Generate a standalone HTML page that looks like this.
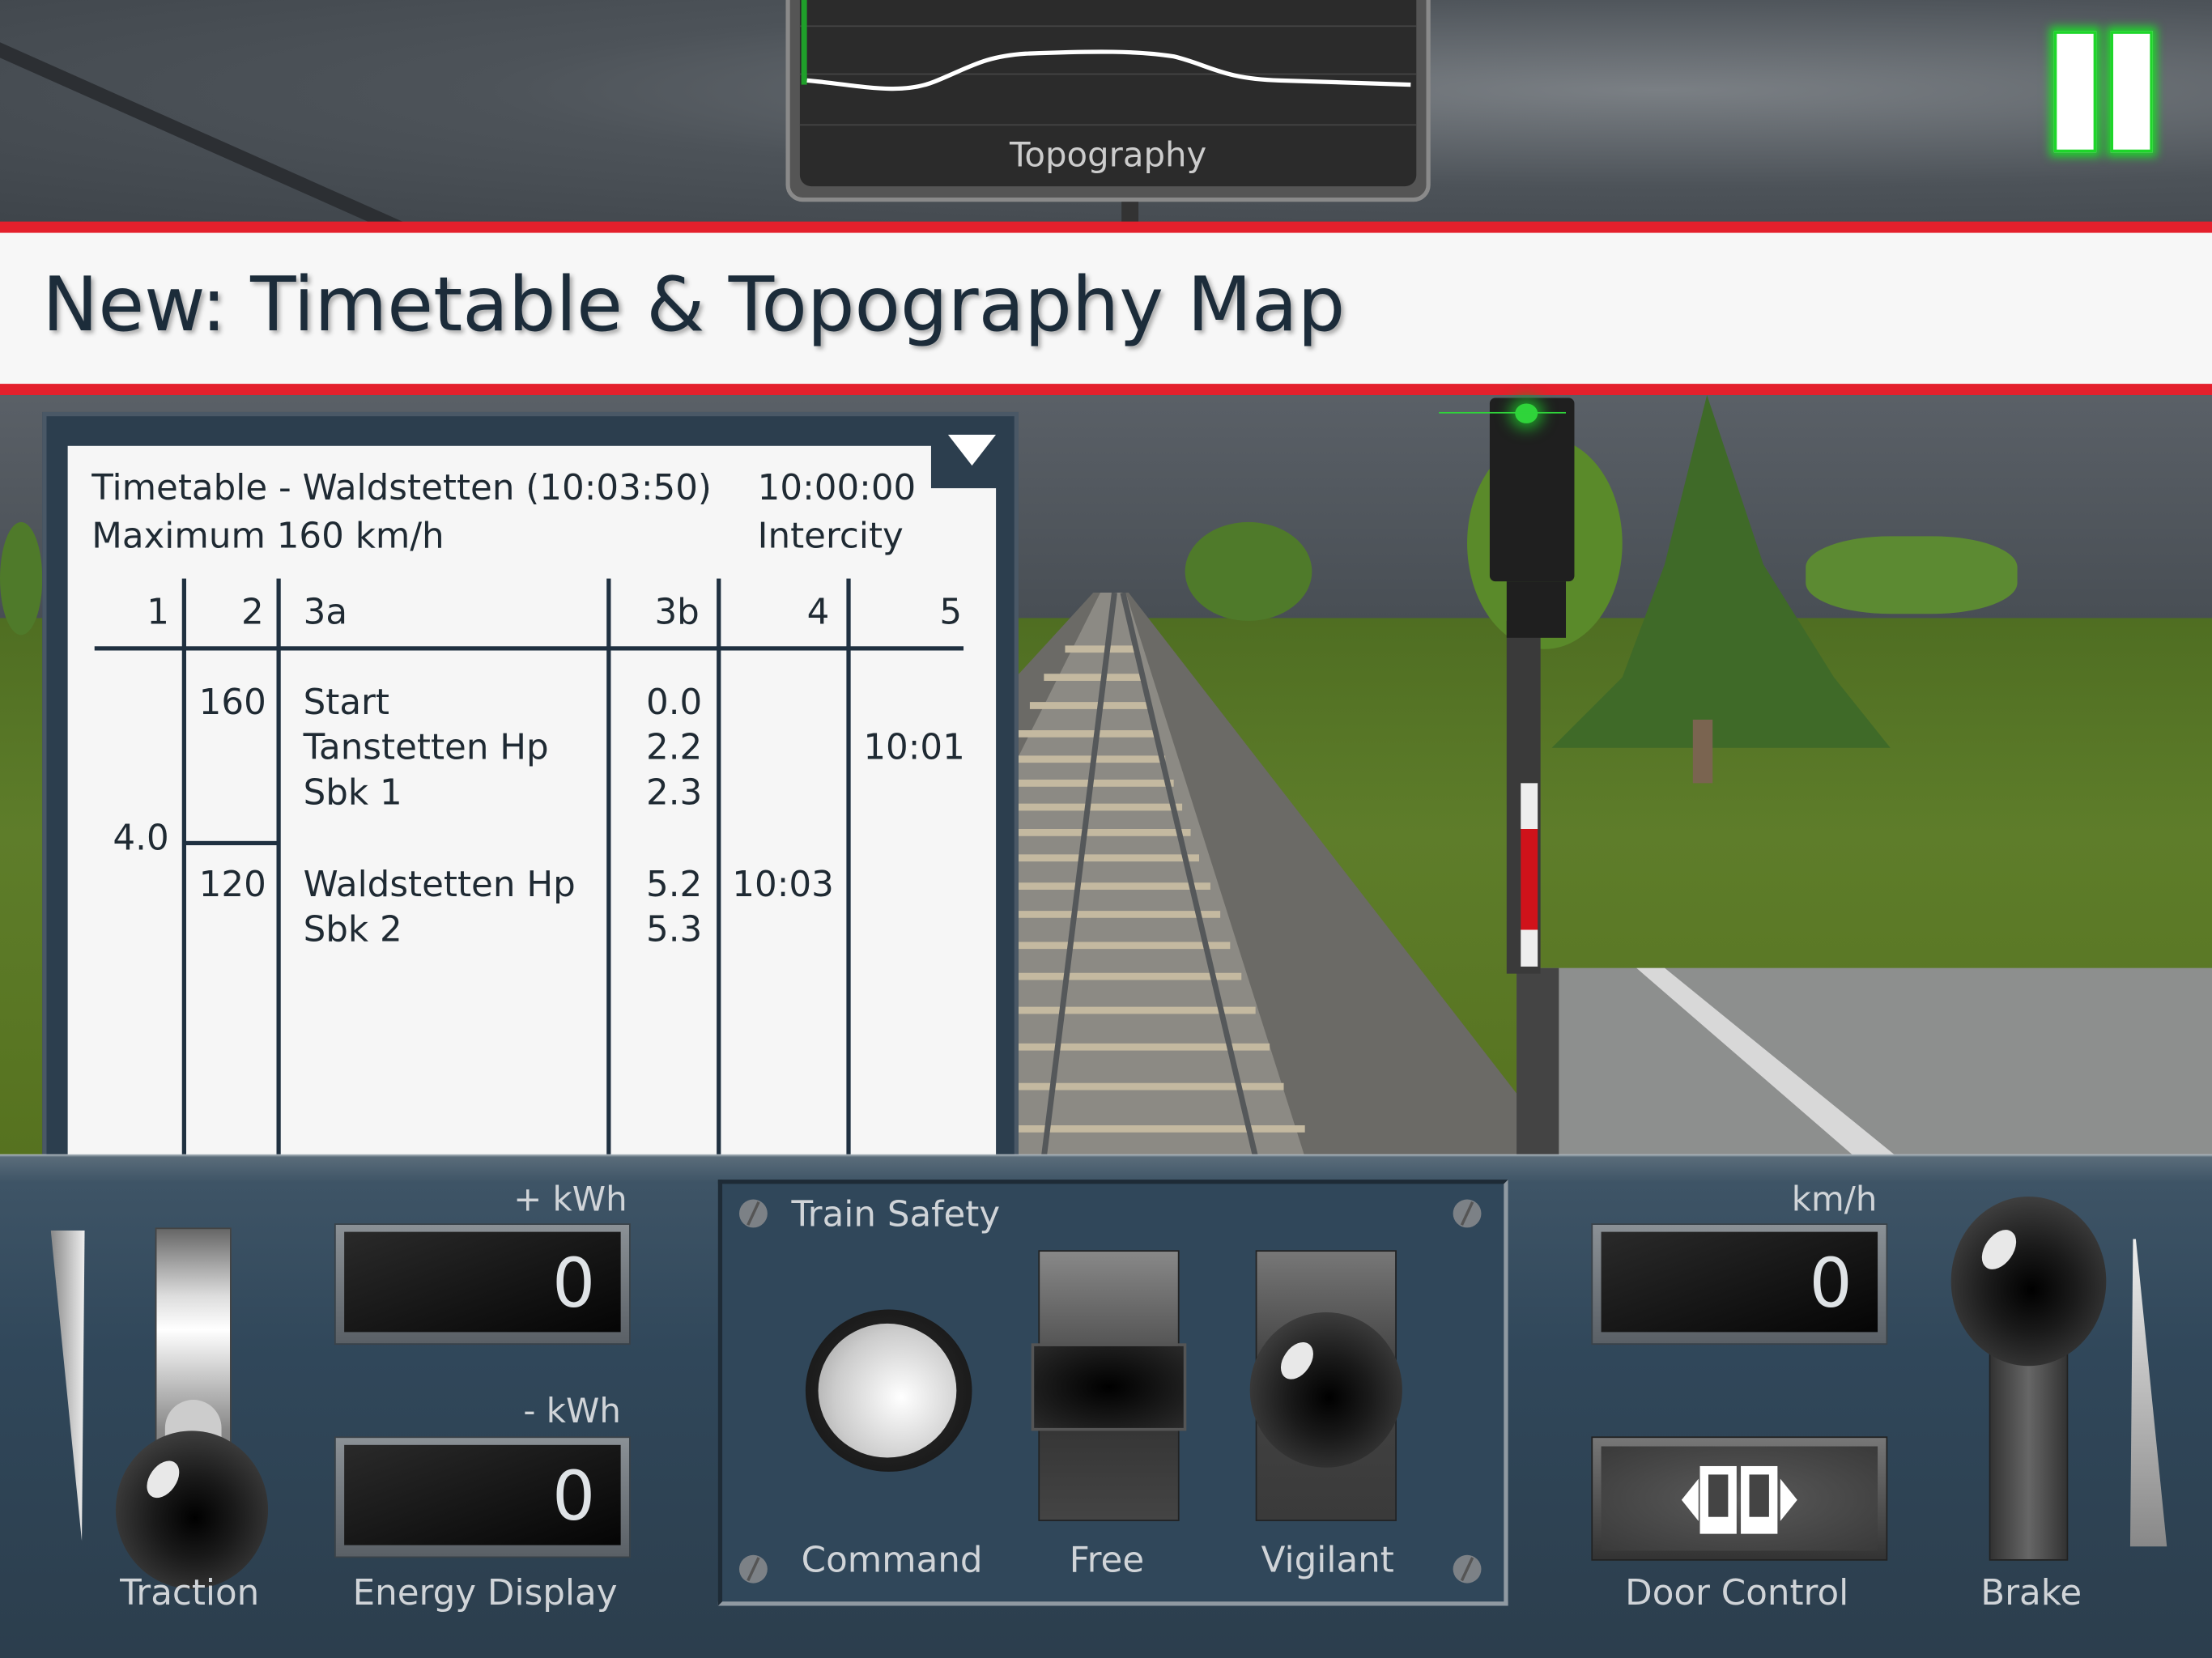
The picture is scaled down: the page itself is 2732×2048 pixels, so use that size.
<!DOCTYPE html>
<html><head><meta charset="utf-8"><style>
*{margin:0;padding:0;box-sizing:border-box}
html,body{width:2732px;height:2048px;overflow:hidden;background:#2e3e4c}
#s{position:absolute;left:0;top:0;width:1568px;height:1175px;transform:scale(1.74235,1.74298);transform-origin:0 0;overflow:hidden;font-family:"DejaVu Sans","Liberation Sans",sans-serif}
.a{position:absolute}
.t{position:absolute;font-size:25px;color:#1f2a33;line-height:1;white-space:nowrap}
.v{position:absolute;width:3px;background:#1f3040;top:410px;height:410px}
.lbl{position:absolute;color:#d0d4d8;font-size:25px;white-space:nowrap;line-height:1}
.disp{position:absolute;background:linear-gradient(#8b9196,#5a6066);padding:5px 6px 8px 6px;border:1px solid #3a4248}
.disp div{width:100%;height:100%;background:linear-gradient(160deg,#2a2a2a,#050505);color:#dfe3e6;font-size:48px;text-align:right;padding-right:18px;line-height:74px}
.knob{position:absolute;border-radius:50%;background:radial-gradient(circle at 52% 55%,#000 0,#1a1a1a 35%,#555 100%)}
.knob:after{content:"";position:absolute;left:22%;top:18%;width:18%;height:26%;background:#e8e8e8;border-radius:50%;transform:rotate(35deg)}
.screw{position:absolute;width:20px;height:20px;border-radius:50%;background:#7c8186}
.screw:after{content:"";position:absolute;left:9px;top:1px;width:2px;height:18px;background:#555;transform:rotate(25deg)}
</style></head><body><div id="s">
<div class="a" style="left:0;top:0;width:1568px;height:160px;background:radial-gradient(ellipse at 75% 40%,#7a7f84 0,#4d5359 50%,#3e444a 100%)"></div>
<div class="a" style="left:0;top:30px;width:320px;height:10px;background:#2c2f33;transform:rotate(24deg);transform-origin:0 0"></div>
<div class="a" style="left:557px;top:-10px;width:457px;height:153px;background:#555;border-radius:0 0 12px 12px;border:3px solid #8a8a8a"></div>
<div class="a" style="left:567px;top:0;width:437px;height:132px;background:#2b2b2b;border-radius:0 0 8px 8px"></div>
<div class="a" style="left:567px;top:18px;width:437px;height:1px;background:#444"></div>
<div class="a" style="left:567px;top:52px;width:437px;height:1px;background:#444"></div>
<div class="a" style="left:567px;top:88px;width:437px;height:1px;background:#444"></div>
<div class="a" style="left:568px;top:0;width:4px;height:60px;background:#1fa02a"></div>
<svg class="a" style="left:567px;top:0" width="437" height="90"><path d="M5 57 C40 60,70 68,95 58 C120 48,130 40,160 38 C210 36,240 36,265 40 C290 46,300 56,340 57 L433 60" stroke="#fff" stroke-width="3" fill="none"/></svg>
<div class="a" style="left:567px;top:96px;width:437px;text-align:center;color:#ccc;font-size:24px">Topography</div>
<div class="a" style="left:795px;top:143px;width:12px;height:15px;background:#333"></div>
<div class="a" style="left:1456px;top:22px;width:30px;height:86px;background:#fff;box-shadow:0 0 6px 3px #1ed62a;border:2px solid #1ed62a"></div>
<div class="a" style="left:1496px;top:22px;width:30px;height:86px;background:#fff;box-shadow:0 0 6px 3px #1ed62a;border:2px solid #1ed62a"></div>
<div class="a" style="left:0;top:157px;width:1568px;height:123px;background:#e4202c"></div>
<div class="a" style="left:0;top:165px;width:1568px;height:107px;background:#f7f7f7"></div>
<div class="a" style="left:30px;top:186px;font-size:53px;color:#1c2c3a;white-space:nowrap;font-family:'DejaVu Sans',sans-serif;text-shadow:2px 2px 3px #aaa">New: Timetable &amp; Topography Map</div>
<div class="a" style="left:0;top:280px;width:1568px;height:170px;background:linear-gradient(#5a6067,#474d53)"></div>
<div class="a" style="left:0;top:438px;width:1568px;height:384px;background:linear-gradient(#4f6e22,#5e7d2a 40%,#56721f)"></div>
<div class="a" style="left:0;top:370px;width:30px;height:80px;border-radius:50%;background:#4f7a2a"></div>
<div class="a" style="left:840px;top:370px;width:90px;height:70px;border-radius:50%;background:#4f7a2a"></div>
<div class="a" style="left:1280px;top:380px;width:150px;height:55px;border-radius:40%;background:#5c8a32"></div>
<div class="a" style="left:1040px;top:310px;width:110px;height:150px;border-radius:50%;background:#5a8a2a"></div>
<svg class="a" style="left:1100px;top:280px" width="240" height="280"><polygon points="110,0 150,120 200,200 240,250 0,250 50,200 80,120" fill="#3f6a28"/><rect x="100" y="230" width="14" height="45" fill="#7a6450"/></svg>
<svg class="a" style="left:720px;top:420px" width="400" height="400"><polygon points="55,0 80,0 390,400 0,400 0,60" fill="#6b6a66"/><polygon points="60,0 78,0 205,400 0,400 0,120" fill="#8c8a84"/>
<g stroke="#c4b9a0" stroke-width="5"><line x1="0" y1="380" x2="205" y2="380"/><line x1="0" y1="350" x2="190" y2="350"/><line x1="0" y1="322" x2="180" y2="322"/><line x1="0" y1="296" x2="170" y2="296"/><line x1="0" y1="272" x2="160" y2="272"/><line x1="0" y1="250" x2="152" y2="250"/><line x1="0" y1="228" x2="145" y2="228"/><line x1="0" y1="208" x2="138" y2="208"/><line x1="0" y1="188" x2="130" y2="188"/><line x1="0" y1="170" x2="124" y2="170"/><line x1="0" y1="152" x2="118" y2="152"/><line x1="0" y1="135" x2="112" y2="135"/><line x1="0" y1="118" x2="106" y2="118"/><line x1="0" y1="100" x2="100" y2="100"/><line x1="10" y1="80" x2="95" y2="80"/><line x1="20" y1="60" x2="90" y2="60"/><line x1="35" y1="40" x2="85" y2="40"/></g>
<g stroke="#55585a" stroke-width="4"><line x1="70" y1="0" x2="20" y2="400"/><line x1="76" y1="0" x2="170" y2="400"/></g></svg>
<div class="a" style="left:1075px;top:686px;width:493px;height:134px;background:#8d8f8e"></div>
<svg class="a" style="left:1075px;top:686px" width="493" height="134"><polygon points="85,0 105,0 270,134 240,134" fill="#d8d8d8"/><polygon points="0,0 30,0 30,134 0,134" fill="#444"/></svg>
<div class="a" style="left:1068px;top:440px;width:24px;height:250px;background:#3a3a3a"></div>
<div class="a" style="left:1078px;top:555px;width:12px;height:130px;background:linear-gradient(#eee 0,#eee 25%,#d0121a 25%,#d0121a 80%,#eee 80%)"></div>
<div class="a" style="left:1056px;top:282px;width:60px;height:130px;background:#1f1f1f;border-radius:4px"></div>
<div class="a" style="left:1068px;top:412px;width:42px;height:40px;background:#1f1f1f"></div>
<div class="a" style="left:1074px;top:286px;width:16px;height:14px;border-radius:50%;background:#2fd43a;box-shadow:0 0 10px 4px #1ea028"></div>
<div class="a" style="left:1020px;top:292px;width:90px;height:1px;background:#2fd43a"></div>
<div class="a" style="left:30px;top:292px;width:692px;height:540px;background:#2c3e4e;border:3px solid #4a5866"></div>
<div class="a" style="left:48px;top:316px;width:658px;height:504px;background:#f6f6f6"></div>
<div class="a" style="left:660px;top:300px;width:56px;height:46px;background:#2c3e4e"></div>
<svg class="a" style="left:672px;top:308px" width="34" height="24"><polygon points="0,0 34,0 17,22" fill="#fff"/></svg>
<div class="t" style="left:65px;top:333px">Timetable - Waldstetten (10:03:50)</div>
<div class="t" style="left:537px;top:333px">10:00:00</div>
<div class="t" style="left:65px;top:367px">Maximum 160 km/h</div>
<div class="t" style="left:537px;top:367px">Intercity</div>
<div class="t" style="left:104px;top:421px">1</div>
<div class="t" style="left:171px;top:421px">2</div>
<div class="t" style="left:215px;top:421px">3a</div>
<div class="t" style="left:464px;top:421px">3b</div>
<div class="t" style="left:572px;top:421px">4</div>
<div class="t" style="left:666px;top:421px">5</div>
<div class="a" style="left:67px;top:458px;width:616px;height:3px;background:#1f3040"></div>
<div class="v" style="left:129px"></div><div class="v" style="left:196px"></div><div class="v" style="left:430px"></div><div class="v" style="left:508px"></div><div class="v" style="left:600px"></div>
<div class="a" style="left:130px;top:596px;width:68px;height:3px;background:#1f3040"></div>
<div class="t" style="left:141px;top:485px">160</div>
<div class="t" style="left:215px;top:485px">Start</div>
<div class="t" style="left:458px;top:485px">0.0</div>
<div class="t" style="left:215px;top:517px">Tanstetten Hp</div>
<div class="t" style="left:458px;top:517px">2.2</div>
<div class="t" style="left:612px;top:517px">10:01</div>
<div class="t" style="left:215px;top:549px">Sbk 1</div>
<div class="t" style="left:458px;top:549px">2.3</div>
<div class="t" style="left:80px;top:581px">4.0</div>
<div class="t" style="left:141px;top:614px">120</div>
<div class="t" style="left:215px;top:614px">Waldstetten Hp</div>
<div class="t" style="left:458px;top:614px">5.2</div>
<div class="t" style="left:519px;top:614px">10:03</div>
<div class="t" style="left:215px;top:646px">Sbk 2</div>
<div class="t" style="left:458px;top:646px">5.3</div>
<div class="a" style="left:0;top:818px;width:1568px;height:357px;background:linear-gradient(#b8c0c6 0,#5a6c7a 2px,#3e5466 20px,#30475a 40%,#2c3e4d 100%)"></div>
<svg class="a" style="left:36px;top:872px" width="26" height="228"><polygon points="0,0 24,0 22,220" fill="url(#g1)"/><defs><linearGradient id="g1"><stop offset="0" stop-color="#888"/><stop offset="1" stop-color="#eee"/></linearGradient></defs></svg>
<div class="a" style="left:110px;top:870px;width:54px;height:240px;background:linear-gradient(#666,#ddd 20%,#fff 30%,#888 60%,#555);border:1px solid #444"></div>
<div class="a" style="left:117px;top:992px;width:40px;height:60px;border-radius:20px;background:#ccc"></div>
<div class="knob" style="left:82px;top:1014px;width:108px;height:112px"></div>
<div class="lbl" style="left:85px;top:1116px">Traction</div>
<div class="lbl" style="left:364px;top:838px;font-size:24px">+ kWh</div>
<div class="disp" style="left:237px;top:867px;width:210px;height:86px"><div>0</div></div>
<div class="lbl" style="left:371px;top:988px;font-size:24px">- kWh</div>
<div class="disp" style="left:237px;top:1018px;width:210px;height:86px"><div>0</div></div>
<div class="lbl" style="left:250px;top:1116px">Energy Display</div>
<div class="a" style="left:509px;top:836px;width:560px;height:302px;border:3px solid #909aa2;border-top-color:#1e2b36;border-left-color:#1e2b36;background:#30475a"></div>
<div class="screw" style="left:524px;top:850px"></div><div class="screw" style="left:1030px;top:850px"></div>
<div class="screw" style="left:524px;top:1102px"></div><div class="screw" style="left:1030px;top:1102px"></div>
<div class="lbl" style="left:561px;top:848px">Train Safety</div>
<div class="a" style="left:571px;top:928px;width:118px;height:115px;border-radius:50%;background:radial-gradient(#333,#111)"></div>
<div class="a" style="left:580px;top:938px;width:98px;height:95px;border-radius:50%;background:radial-gradient(circle at 60% 55%,#fff,#ccc 60%,#999)"></div>
<div class="a" style="left:736px;top:886px;width:100px;height:192px;background:linear-gradient(#888,#555 35%,#333 60%,#444);border:1px solid #222"></div>
<div class="a" style="left:731px;top:952px;width:110px;height:62px;background:radial-gradient(#000,#2a2a2a);border:2px solid #555"></div>
<div class="a" style="left:890px;top:886px;width:100px;height:192px;background:linear-gradient(#777,#444 40%,#3a3a3a);border:1px solid #222"></div>
<div class="knob" style="left:886px;top:930px;width:108px;height:110px"></div>
<div class="lbl" style="left:568px;top:1093px">Command</div>
<div class="lbl" style="left:758px;top:1093px">Free</div>
<div class="lbl" style="left:894px;top:1093px">Vigilant</div>
<div class="lbl" style="left:1270px;top:838px;font-size:24px">km/h</div>
<div class="disp" style="left:1128px;top:867px;width:210px;height:86px"><div>0</div></div>
<div class="a" style="left:1128px;top:1018px;width:210px;height:88px;background:linear-gradient(#777,#333);padding:6px;border:1px solid #222"><div style="width:100%;height:100%;background:radial-gradient(#5a5a5a,#3a3a3a)"></div></div>
<svg class="a" style="left:1190px;top:1036px" width="86" height="54"><polygon points="14,12 2,27 14,42" fill="#fff"/><polygon points="72,12 84,27 72,42" fill="#fff"/><rect x="15" y="3" width="26" height="48" fill="#fff"/><rect x="44" y="3" width="26" height="48" fill="#fff"/><rect x="21" y="9" width="14" height="30" fill="#444"/><rect x="50" y="9" width="14" height="30" fill="#444"/></svg>
<div class="lbl" style="left:1152px;top:1116px">Door Control</div>
<div class="a" style="left:1410px;top:940px;width:56px;height:166px;background:linear-gradient(90deg,#333,#666 50%,#333);border:1px solid #222"></div>
<div class="knob" style="left:1383px;top:848px;width:110px;height:120px"></div>
<svg class="a" style="left:1508px;top:878px" width="30" height="222"><polygon points="4,0 6,0 28,218 2,218" fill="url(#g2)"/><defs><linearGradient id="g2" x1="0" y1="0" x2="0" y2="1"><stop offset="0" stop-color="#eee"/><stop offset="1" stop-color="#888"/></linearGradient></defs></svg>
<div class="lbl" style="left:1404px;top:1116px">Brake</div>
</div></body></html>
